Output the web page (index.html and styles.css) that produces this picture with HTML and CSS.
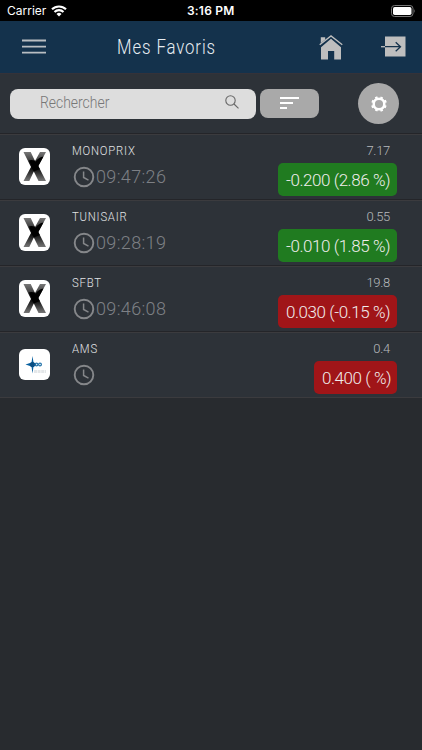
FILE: index.html
```html
<!DOCTYPE html>
<html lang="fr">
<head>
<meta charset="utf-8">
<meta name="viewport" content="width=device-width">
<title>Mes Favoris</title>
<link rel="stylesheet" href="styles.css">
</head>
<body>
<svg class="defs" aria-hidden="true">
  <defs>
    <linearGradient id="shade" x1="0" y1="0" x2="0" y2="1">
      <stop offset="0" stop-color="#777"/><stop offset=".25" stop-color="#484848"/><stop offset=".35" stop-color="#151515"/><stop offset=".58" stop-color="#111"/><stop offset="1" stop-color="#777"/>
    </linearGradient>
    <symbol id="x-logo" viewBox="0 0 31 37">
      <path d="M4.500 4h7.200L16 13l5-9h6l-7.700 14L27 33h-7.500l-4.700-9.500L10.300 33H4.500L12 19z" fill="url(#shade)"/>
      <path d="M10 12.500q2-1 5.500 0l1 1.500q3-5 8-5.500L19.300 18l1.500 3-6 2.500L12 19l.5-1z" fill="#000"/>
    </symbol>
    <symbol id="clock" viewBox="0 0 22 22">
      <circle cx="11" cy="11" r="9.300" fill="none" stroke="#85878a" stroke-width="1.900"/>
      <path d="M10.600 5.500v6l4.900 2.600" fill="none" stroke="#85878a" stroke-width="1.500"/>
    </symbol>
  </defs>
</svg>
<div class="status">
  <span class="carrier">Carrier</span>
  <svg class="wifi" viewBox="0 0 16 12"><g fill="none" stroke="#fff" stroke-width="2.100"><path d="M1 4.300a10 10 0 0 1 14 0"/><path d="M3.500 7a6.400 6.400 0 0 1 9 0"/></g><path d="M5.500 9a3.600 3.600 0 0 1 5 0L8 11.500z" fill="#fff"/></svg>
  <span class="clock-time">3:16 PM</span>
  <svg class="battery" viewBox="0 0 25 12"><rect x=".5" y=".5" width="21.500" height="11" rx="3" fill="none" stroke="#777"/><rect x="2" y="2" width="18.500" height="8" rx="1.700" fill="#fff"/><path d="M23.200 4q1.500 2 0 4z" fill="#777"/></svg>
</div>
<header class="bar">
  <svg class="menu" viewBox="0 0 24 16"><path d="M0 1.500h24M0 7.600h24M0 13.700h24" stroke="#b9bec2" stroke-width="1.800"/></svg>
  <h1>Mes Favoris</h1>
  <svg class="home" viewBox="0 0 24 25"><path d="M1.800 2.300h4.400v3L1.800 9zM2 12.200 12 3.800l10 8.400V24.500h-6.800V16H9v8.500H2z" fill="#bebebe"/><path d="M.7 10.800 12 1.300l11.300 9.500" fill="none" stroke="#14324c" stroke-width="2.600"/><path d="M.7 9.800 12 .9l11.300 8.900" fill="none" stroke="#bebebe" stroke-width="1.300"/></svg>
  <svg class="exit" viewBox="0 0 25 21"><path d="M4 .5h20.500v20H4z" fill="#bebebe"/><path d="M0 10.700h4" stroke="#bebebe" stroke-width="1.300"/><path d="M4 10.700h15.500M14.700 6.200l4.800 4.500-4.800 4.500" fill="none" stroke="#14324c" stroke-width="1.300"/></svg>
</header>
<div class="tools">
  <div class="search"><span class="placeholder">Rechercher</span><svg class="lens" viewBox="0 0 14 14"><circle cx="5.500" cy="5.500" r="4.700"/><path d="m9 9 4.500 4.300"/></svg></div>
  <div class="sort"><svg viewBox="0 0 20 14"><path d="M0 2h19M0 7h13M0 12.100h7" stroke="#fff" stroke-width="2"/></svg></div>
  <div class="gear"><svg viewBox="-8 -8 16 16"><circle r="5.300" fill="none" stroke="#fff" stroke-width="2.500"/><path d="M0-5.800V-7.700M0 5.800v1.900M-5.800 0h-1.900M5.800 0h1.900M-4.100-4.100l-1.500-1.500M4.100-4.100l1.500-1.500M-4.100 4.100l-1.500 1.500M4.100 4.100l1.500 1.500" transform="rotate(22.500)" stroke="#fff" stroke-width="2.600"/></svg></div>
</div>
<main>
  <article class="row">
    <div class="logo"><svg><use href="#x-logo"/></svg></div>
    <div class="info"><h2>MONOPRIX</h2><div class="time"><svg><use href="#clock"/></svg><span>09:47:26</span></div></div>
    <div class="quote"><span class="price">7.17</span><span class="change up"><span>-0.200 (2.86 %)</span></span></div>
  </article>
  <article class="row">
    <div class="logo"><svg><use href="#x-logo"/></svg></div>
    <div class="info"><h2>TUNISAIR</h2><div class="time"><svg><use href="#clock"/></svg><span>09:28:19</span></div></div>
    <div class="quote"><span class="price">0.55</span><span class="change up"><span>-0.010 (1.85 %)</span></span></div>
  </article>
  <article class="row">
    <div class="logo"><svg><use href="#x-logo"/></svg></div>
    <div class="info"><h2>SFBT</h2><div class="time"><svg><use href="#clock"/></svg><span>09:46:08</span></div></div>
    <div class="quote"><span class="price">19.8</span><span class="change down"><span>0.030 (-0.15 %)</span></span></div>
  </article>
  <article class="row">
    <div class="logo square"><svg viewBox="0 0 31 31"><path d="m13.500 7 1 6.500 3 2-3 2-1 7-1-7-6-2 6-2z" fill="#075f9f"/><circle cx="13.500" cy="15.500" r="2.600" fill="#0a4e83"/><g fill="none" stroke="#2675ab" stroke-width="1.200"><circle cx="17.500" cy="15.500" r="1.400"/><circle cx="21" cy="15.500" r="1.400"/></g><path d="M15 22.500h12" stroke="#e4e7e9" stroke-width="3" stroke-dasharray="3 .6"/></svg></div>
    <div class="info"><h2>AMS</h2><div class="time"><svg><use href="#clock"/></svg></div></div>
    <div class="quote"><span class="price">0.4</span><span class="change down small"><span>0.400 ( %)</span></span></div>
  </article>
</main>
</body>
</html>
```
FILE: styles.css
```css
* { box-sizing: border-box; }
body { margin: 0; height: 750px; overflow: hidden; background: #282b2f; color: #ddd; font-family: Roboto, sans-serif; font-weight: 300; }
svg { display: block; flex: none; }
h1, h2 { margin: 0; font-weight: 300; }
span, h1, h2 { white-space: nowrap; }
.defs { position: absolute; width: 0; height: 0; }
.status { height: 21px; background: #000; color: #fff; display: grid; grid-template-columns: 44px 136px 204px 25px; align-items: center; padding-left: 7px; font: 400 12px/21px Inter, sans-serif; }
.wifi { width: 16px; height: 12px; }
.clock-time { font-weight: 600; letter-spacing: .2px; }
.status > .battery { width: 25px; height: 12px; margin-top: 0; }
.bar { height: 53px; background: #14324c; border-bottom: 1px solid #343239; display: grid; grid-template-columns: 95px 203px 61px 25px; align-items: center; padding-left: 22px; }
.menu { width: 24px; height: 16px; }
.bar h1 { font-size: 19.5px; line-height: 24px; letter-spacing: 1.05px; color: #e7edf2; transform: scaleX(.86); transform-origin: left; margin-top: 1px; }
.home { width: 24px; height: 25px; margin-left: -1px; }
.exit { width: 25px; height: 21px; margin-top: -1px; }
.tools { height: 59px; background: #2d3238; display: flex; align-items: center; padding: 0 23px 0 9.500px; }
.search { width: 246px; height: 30px; border-radius: 8px; background: #ddd; display: flex; align-items: center; justify-content: space-between; padding: 0 17px 0 30.500px; }
.placeholder { font-size: 16px; color: #777; transform: scaleX(.87); transform-origin: left; margin-top: -2px; }
.lens { width: 14px; height: 14px; margin-top: -3px; fill: none; stroke: #686868; stroke-width: 1.1; }
.sort { width: 59px; height: 29px; border-radius: 8px; background: #a9a9a9; margin-left: 4.500px; padding: 7px 20px; }
.sort svg { width: 20px; height: 14px; }
.gear { width: 41px; height: 41px; border-radius: 50%; background: #a9a9a9; margin-left: auto; display: grid; place-items: center; }
.gear svg { width: 16px; height: 16px; }
.row { height: 66px; background: #2d3238; border-top: 1px solid #242529; box-shadow: inset 0 1px #3b3b3e; display: grid; grid-template-columns: 53px 1fr auto; padding: 0 25px 0 19px; }
.row:last-child { height: 67px; border-bottom: 1px solid #3b3b3e; }
.logo { width: 31px; height: 37px; margin-top: 14px; background: #fff; border-radius: 6px; }
.logo.square { height: 31px; margin-top: 17px; }
.logo svg { width: 100%; height: 100%; }
.info { padding-top: 9px; }
.info h2 { font-size: 13px; line-height: 16px; letter-spacing: .9px; color: #e1e3e5; transform: scaleX(.87); transform-origin: left; }
.time { height: 22px; margin: 7px 0 0 1px; display: flex; align-items: center; font-size: 18px; color: #7d8085; }
.time svg { width: 22px; height: 22px; }
.time span { margin: -2px 0 0 1px; letter-spacing: .35px; }
.quote { display: flex; flex-direction: column; align-items: flex-end; padding-top: 9px; }
.price { font-size: 13px; line-height: 16px; color: #b7babd; margin-right: 7px; letter-spacing: -.3px; }
.change { width: 119px; height: 33px; margin-top: 4px; border-radius: 5px; display: grid; align-items: center; padding: 0 0 0 8px; font-size: 17px; color: #f1eded; letter-spacing: -.45px; }
.change.small { width: 83px; }
.up { background: #207b20; }
.down { background: #a01518; }
```
